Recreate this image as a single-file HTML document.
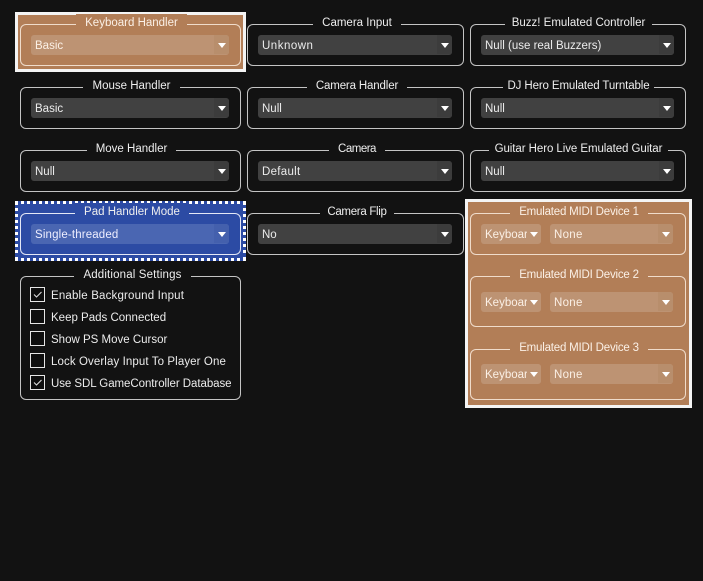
<!DOCTYPE html>
<html><head><meta charset="utf-8"><style>
html,body{margin:0;padding:0;background:#121212;width:703px;height:581px;overflow:hidden}
body{position:relative;font-family:"Liberation Sans",sans-serif;font-size:11.5px;color:#f0f0f0}
div{position:absolute;box-sizing:border-box}
.hl{border:3px solid #f4f4f4;background:#b27e57}
.pad{background:#2c4ba4;border:3px dotted #fff}
.g{border:1px solid #c4c4c4;border-radius:6px}
.t{background:#121212;height:16px;line-height:18px;text-align:center;white-space:nowrap;color:#eee}
.or .t{background:#b27e57;color:#fbf0e6}
.bl .t{background:#2c4ba4}
.c{height:20px;background:#414141;border-radius:3px;line-height:22px;padding-left:4px;color:#ececec;white-space:nowrap;overflow:hidden}
.c i{position:absolute;right:0;top:0;width:15px;height:19px;background:#3c3c3c}
.c b{position:absolute;right:3px;top:8px;width:0;height:0;border-left:4.5px solid transparent;border-right:4.5px solid transparent;border-top:5px solid #fff}
.or .c{background:#bd9373;color:#fbf0e6}.or .c i{background:#b88e6c}
.bl .c{background:#4a66b2;color:#eef}.bl .c i{background:#4460ad}
.or .c i.n{width:14px;background:#bd9373}
.k{width:15px;height:15px;border:1px solid #e6e6e6;background:#0e0e0e;left:30px}
.l{left:51px;height:16px;line-height:18px;white-space:nowrap;color:#ececec}
</style></head><body>

<div class="hl" style="left:15px;top:12px;width:231px;height:60px"></div>
<div class="pad" style="left:15px;top:201px;width:231px;height:60px"></div>
<div class="hl" style="left:465px;top:199px;width:227px;height:209px"></div>

<!-- Column 1 -->
<div class="or">
<div class="g" style="left:20px;top:24px;width:221px;height:42px;border-color:#f0dccb"></div>
<div class="t" style="left:76px;top:14px;width:111px">Keyboard Handler</div>
<div class="c" style="left:31px;top:35px;width:198px">Basic<i></i><b></b></div>
</div>

<div class="g" style="left:20px;top:87px;width:221px;height:42px"></div>
<div class="t" style="left:83px;top:77px;width:97px">Mouse Handler</div>
<div class="c" style="left:31px;top:98px;width:198px">Basic<i></i><b></b></div>

<div class="g" style="left:20px;top:150px;width:221px;height:42px"></div>
<div class="t" style="left:87px;top:140px;width:89px">Move Handler</div>
<div class="c" style="left:31px;top:161px;width:198px">Null<i></i><b></b></div>

<div class="bl">
<div class="g" style="left:20px;top:213px;width:221px;height:42px;border-color:#e4e8f6"></div>
<div class="t" style="left:75px;top:203px;width:114px">Pad Handler Mode</div>
<div class="c" style="left:31px;top:224px;width:198px;letter-spacing:.15px">Single-threaded<i></i><b></b></div>
</div>

<div class="g" style="left:20px;top:276px;width:221px;height:124px"></div>
<div class="t" style="left:74px;top:266px;width:117px;letter-spacing:.15px">Additional Settings</div>

<div class="k" style="top:287px"><svg width="13" height="13" style="display:block"><path d="M3 6.5L5.5 9L10.5 4" fill="none" stroke="#dcdcdc" stroke-width="1.1"/></svg></div>
<div class="l" style="top:287px;letter-spacing:.17px">Enable Background Input</div>
<div class="k" style="top:309px"></div>
<div class="l" style="top:309px">Keep Pads Connected</div>
<div class="k" style="top:331px"></div>
<div class="l" style="top:331px">Show PS Move Cursor</div>
<div class="k" style="top:353px"></div>
<div class="l" style="top:353px;letter-spacing:.1px">Lock Overlay Input To Player One</div>
<div class="k" style="top:375px"><svg width="13" height="13" style="display:block"><path d="M3 6.5L5.5 9L10.5 4" fill="none" stroke="#dcdcdc" stroke-width="1.1"/></svg></div>
<div class="l" style="top:375px;letter-spacing:-.06px">Use SDL GameController Database</div>

<!-- Column 2 -->
<div class="g" style="left:247px;top:24px;width:217px;height:42px"></div>
<div class="t" style="left:313px;top:14px;width:88px">Camera Input</div>
<div class="c" style="left:258px;top:35px;width:194px;letter-spacing:.5px">Unknown<i></i><b></b></div>

<div class="g" style="left:247px;top:87px;width:217px;height:42px"></div>
<div class="t" style="left:307px;top:77px;width:100px;letter-spacing:-.15px">Camera Handler</div>
<div class="c" style="left:258px;top:98px;width:194px">Null<i></i><b></b></div>

<div class="g" style="left:247px;top:150px;width:217px;height:42px"></div>
<div class="t" style="left:329px;top:140px;width:56px;letter-spacing:-.5px">Camera</div>
<div class="c" style="left:258px;top:161px;width:194px;letter-spacing:.3px">Default<i></i><b></b></div>

<div class="g" style="left:247px;top:213px;width:217px;height:42px"></div>
<div class="t" style="left:320px;top:203px;width:74px;letter-spacing:-.3px">Camera Flip</div>
<div class="c" style="left:258px;top:224px;width:194px">No<i></i><b></b></div>

<!-- Column 3 -->
<div class="g" style="left:470px;top:24px;width:216px;height:42px"></div>
<div class="t" style="left:505px;top:14px;width:147px">Buzz! Emulated Controller</div>
<div class="c" style="left:481px;top:35px;width:193px">Null (use real Buzzers)<i></i><b></b></div>

<div class="g" style="left:470px;top:87px;width:216px;height:42px"></div>
<div class="t" style="left:503px;top:77px;width:151px;letter-spacing:-.12px">DJ Hero Emulated Turntable</div>
<div class="c" style="left:481px;top:98px;width:193px">Null<i></i><b></b></div>

<div class="g" style="left:470px;top:150px;width:216px;height:42px"></div>
<div class="t" style="left:489px;top:140px;width:179px;letter-spacing:-.07px">Guitar Hero Live Emulated Guitar</div>
<div class="c" style="left:481px;top:161px;width:193px">Null<i></i><b></b></div>

<div class="or">
<div class="g" style="left:470px;top:213px;width:216px;height:42px;border-color:#f0dccb"></div>
<div class="t" style="left:510px;top:203px;width:138px;letter-spacing:-.2px">Emulated MIDI Device 1</div>
<div class="c" style="left:481px;top:224px;width:60px">Keyboard<i class="n"></i><b></b></div>
<div class="c" style="left:550px;top:224px;width:123px;letter-spacing:.3px">None<i></i><b></b></div>

<div class="g" style="left:470px;top:276px;width:216px;height:51px;border-color:#f0dccb"></div>
<div class="t" style="left:510px;top:266px;width:138px;letter-spacing:-.2px">Emulated MIDI Device 2</div>
<div class="c" style="left:481px;top:292px;width:60px">Keyboard<i class="n"></i><b></b></div>
<div class="c" style="left:550px;top:292px;width:123px;letter-spacing:.3px">None<i></i><b></b></div>

<div class="g" style="left:470px;top:349px;width:216px;height:51px;border-color:#f0dccb"></div>
<div class="t" style="left:510px;top:339px;width:138px;letter-spacing:-.2px">Emulated MIDI Device 3</div>
<div class="c" style="left:481px;top:364px;width:60px">Keyboard<i class="n"></i><b></b></div>
<div class="c" style="left:550px;top:364px;width:123px;letter-spacing:.3px">None<i></i><b></b></div>
</div>

</body></html>
